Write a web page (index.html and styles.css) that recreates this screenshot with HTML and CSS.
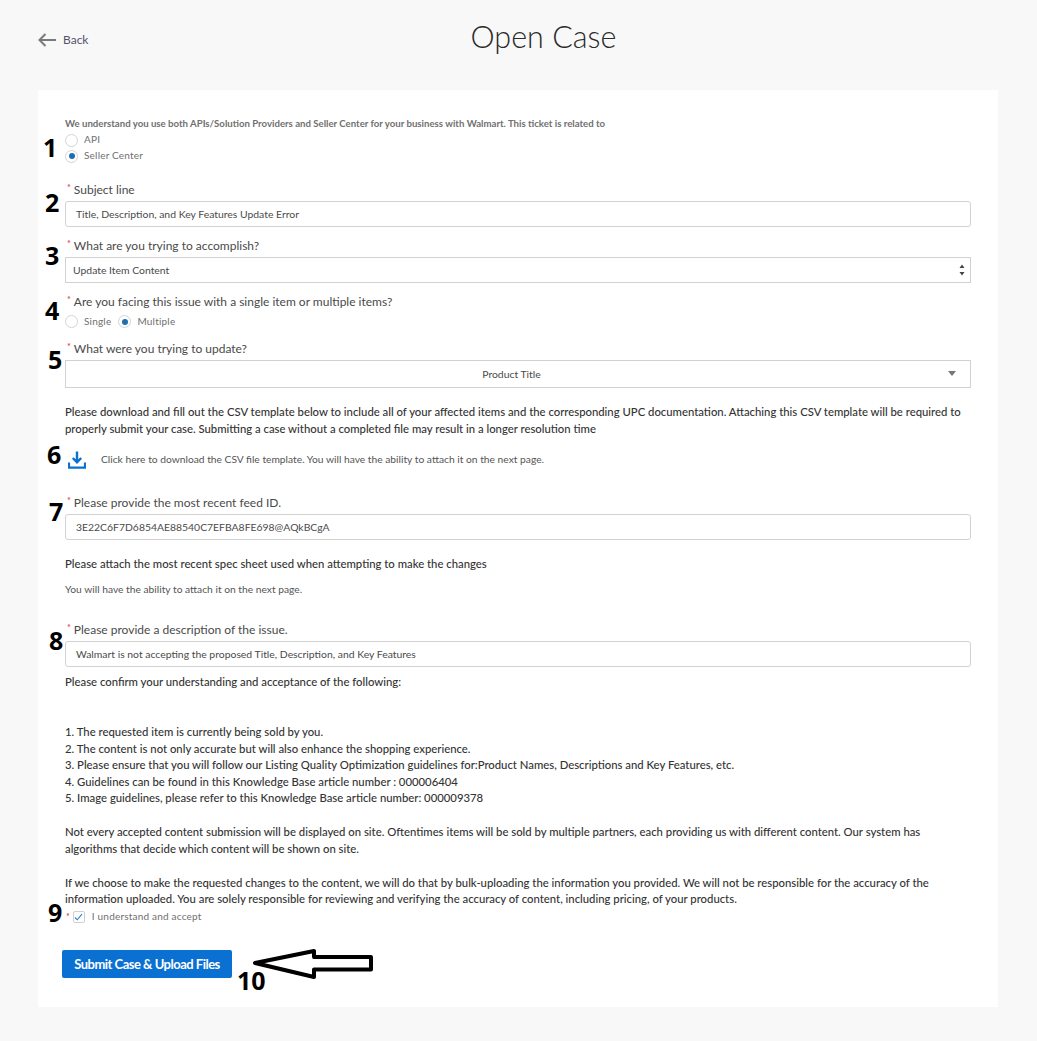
FILE: index.html
```html
<!DOCTYPE html>
<html lang="en">
<head>
<meta charset="utf-8">
<title>Open Case</title>
<link rel="stylesheet" href="styles.css">
</head>
<body>
<header class="top">
  <a class="back">
    <svg class="back-icon" width="18" height="14" viewBox="0 0 18 14"><path d="M7.5 1 1.5 7l6 6M1.5 7H18" fill="none" stroke="#7a7a7a" stroke-width="2"/></svg>
    <span>Back</span>
  </a>
  <h1 class="title">Open Case</h1>
</header>
<main class="card">
  <p class="intro">We understand you use both APIs/Solution Providers and Seller Center for your business with Walmart. This ticket is related to</p>
  <div class="radio-stack">
    <div class="radio-row"><span class="radio"></span><span class="opt">API</span></div>
    <div class="radio-row"><span class="radio on"></span><span class="opt">Seller Center</span></div>
  </div>

  <div class="field f-subject">
    <label class="label"><span class="req">*</span>Subject line</label>
    <div class="input">Title, Description, and Key Features Update Error</div>
  </div>
  <div class="field">
    <label class="label"><span class="req">*</span>What are you trying to accomplish?</label>
    <div class="select">Update Item Content
      <svg class="updown" width="6" height="12" viewBox="0 0 6 12"><path d="M3 .5 5.500 4H.5ZM3 11.500.5 8H5.500Z" fill="#444"/></svg>
    </div>
  </div>
  <div class="field">
    <label class="label"><span class="req">*</span>Are you facing this issue with a single item or multiple items?</label>
    <div class="radio-inline">
      <div class="radio-row"><span class="radio"></span><span class="opt">Single</span></div>
      <div class="radio-row"><span class="radio on"></span><span class="opt">Multiple</span></div>
    </div>
  </div>
  <div class="field f-update">
    <label class="label"><span class="req">*</span>What were you trying to update?</label>
    <div class="combo">Product Title<span class="caret"></span></div>
  </div>

  <p class="body p-csv">Please download and fill out the CSV template below to include all of your affected items and the corresponding UPC documentation. Attaching this CSV template will be required to properly submit your case. Submitting a case without a completed file may result in a longer resolution time</p>
  <div class="download">
    <svg class="dl-icon" width="18" height="18" viewBox="0 0 18 18"><path d="M9 .5V11M4.8 7 9 11.3 13.2 7" fill="none" stroke="#0a70d2" stroke-width="2.4"/><path d="M1 11.500V16.600H17V11.500" fill="none" stroke="#0a70d2" stroke-width="2.2"/></svg>
    <span class="small">Click here to download the CSV file template. You will have the ability to attach it on the next page.</span>
  </div>

  <div class="field f-feed">
    <label class="label"><span class="req">*</span>Please provide the most recent feed ID.</label>
    <div class="input">3E22C6F7D6854AE88540C7EFBA8FE698@AQkBCgA</div>
  </div>
  <p class="body p-spec">Please attach the most recent spec sheet used when attempting to make the changes</p>
  <p class="small p-next">You will have the ability to attach it on the next page.</p>
  <div class="field f-desc">
    <label class="label"><span class="req">*</span>Please provide a description of the issue.</label>
    <div class="input">Walmart is not accepting the proposed Title, Description, and Key Features</div>
  </div>

  <p class="body p-confirm">Please confirm your understanding and acceptance of the following:</p>
  <ol class="body rules">
    <li>1. The requested item is currently being sold by you.</li>
    <li>2. The content is not only accurate but will also enhance the shopping experience.</li>
    <li>3. Please ensure that you will follow our Listing Quality Optimization guidelines for:Product Names, Descriptions and Key Features, etc.</li>
    <li>4. Guidelines can be found in this Knowledge Base article number : 000006404</li>
    <li>5. Image guidelines, please refer to this Knowledge Base article number: 000009378</li>
  </ol>
  <p class="body p-gap">Not every accepted content submission will be displayed on site. Oftentimes items will be sold by multiple partners, each providing us with different content. Our system has algorithms that decide which content will be shown on site.</p>
  <p class="body p-gap">If we choose to make the requested changes to the content, we will do that by bulk-uploading the information you provided. We will not be responsible for the accuracy of the information uploaded. You are solely responsible for reviewing and verifying the accuracy of content, including pricing, of your products.</p>
  <div class="accept">
    <span class="req">*</span>
    <span class="check"><svg width="9" height="8" viewBox="0 0 9 8"><path d="M1 4.500 3.200 6.800 8 1.200" fill="none" stroke="#2d7fc4" stroke-width="1.1"/></svg></span>
    <span class="opt">I understand and accept</span>
  </div>
  <button class="submit" type="button">Submit Case &amp; Upload Files</button>

  <span class="mark m1">1</span>
  <span class="mark m2">2</span>
  <span class="mark m3">3</span>
  <span class="mark m4">4</span>
  <span class="mark m5">5</span>
  <span class="mark m6">6</span>
  <span class="mark m7">7</span>
  <span class="mark m8">8</span>
  <span class="mark m9">9</span>
  <span class="mark m10">10</span>
  <svg class="arrow" width="122" height="32" viewBox="0 0 122 32"><path d="M3 15 62 3V9H119V21.500H62V29Z" fill="#fff" stroke="#000" stroke-width="4" stroke-linejoin="round"/></svg>
</main>
</body>
</html>
```

FILE: styles.css
```css
* { box-sizing: border-box; }
html, body { margin: 0; padding: 0; }
body {
  width: 1037px;
  height: 1041px;
  background: #f8f8f8;
  font-family: Lato, "Liberation Sans", sans-serif;
  color: #333;
  overflow: hidden;
}
.top {
  height: 90px;
  position: relative;
  display: flex;
  justify-content: center;
  padding-left: 50px;
}
.back {
  position: absolute;
  left: 38px;
  top: 31px;
  display: flex;
  align-items: center;
  gap: 7px;
  font-size: 12px;
  line-height: 18px;
  color: #54536b;
}
.title {
  margin: 15px 0 0;
  font-size: 30.500px;
  line-height: 42px;
  font-weight: 300;
  color: #2b2b2b;
}
.card {
  position: relative;
  width: 960px;
  height: 917px;
  margin-left: 38px;
  padding: 26px 27px 0;
  background: #fff;
}
p { margin: 0; }
.intro {
  font-size: 9.650px;
  line-height: 14px;
  font-weight: 700;
  color: #707070;
  height: 14px;
}
.radio-stack { margin-top: 3.500px; display: flex; flex-direction: column; gap: 3px; }
.radio-row { display: flex; align-items: center; height: 13px; }
.radio {
  width: 13px;
  height: 13px;
  border-radius: 50%;
  border: 1px solid #d4d4d4;
  background: #fff;
  position: relative;
  flex: none;
}
.radio.on::after {
  content: "";
  position: absolute;
  left: 2.500px;
  top: 2.500px;
  width: 6px;
  height: 6px;
  border-radius: 50%;
  background: #1f6fb0;
}
.opt { margin-left: 6px; margin-bottom: 1px; font-size: 10px; line-height: 13px; color: #6f6f6f; letter-spacing: 0.2px; }
.radio-inline { display: flex; gap: 7px; margin-top: 2px; }
.field { margin-top: 8px; }
.f-subject { margin-top: 16.500px; }
.f-update { margin-top: 10px; }
.f-feed { margin-top: 20px; }
.f-desc { margin-top: 23px; }
.label {
  display: block;
  height: 22px;
  padding-left: 2px;
  font-size: 12px;
  line-height: 18px;
  color: #4a4a4a;
}
.req { color: #e0212b; font-size: 9px; vertical-align: 3px; margin-right: 3px; }
.input, .select, .combo {
  width: 906px;
  font-size: 10.400px;
  color: #4a4a4a;
  border: 1px solid #d2d2d2;
  background: #fff;
  display: flex;
  align-items: center;
}
.input { height: 26px; padding-left: 10px; border-radius: 3px; }
.select { height: 26px; padding-left: 7px; padding-bottom: 1px; position: relative; }
.updown { position: absolute; right: 5px; top: 6px; }
.combo { height: 28px; justify-content: center; position: relative; padding-right: 13px; }
.caret {
  position: absolute;
  right: 14px;
  top: 10px;
  width: 0;
  height: 0;
  border-left: 4px solid transparent;
  border-right: 4px solid transparent;
  border-top: 5px solid #777;
}
.body { font-size: 11.320px; line-height: 16.600px; color: #333; font-weight: 500; }
.small { font-size: 10.250px; line-height: 14px; color: #555; }
.p-csv { margin-top: 16px; width: 906px; }
.download { display: flex; align-items: center; margin-top: 11px; height: 24px; padding-left: 3px; }
.dl-icon { flex: none; }
.download .small { margin: 0 0 2px 15px; }
.p-spec { margin-top: 16px; }
.p-next { margin-top: 9px; }
.p-confirm { margin-top: 7px; }
.rules { list-style: none; margin: 33.600px 0 0; padding: 0; }
.p-gap { margin-top: 17.200px; width: 906px; }
.accept { display: flex; align-items: center; margin-top: 2px; height: 14px; }
.accept .req { margin: 0 2px 0 1px; }
.check {
  width: 12px;
  height: 12px;
  border: 1px solid #cfcfcf;
  border-radius: 2px;
  display: flex;
  align-items: center;
  justify-content: center;
  flex: none;
  margin-left: 1px;
}
.accept .opt { margin-left: 7px; margin-bottom: 0; }
.submit {
  display: block;
  margin: 26px 0 0 -3px;
  width: 170px;
  height: 28px;
  border: 0;
  border-radius: 2px;
  background: #0a70d2;
  color: #fff;
  font: 700 13px Lato, "Liberation Sans", sans-serif;
  letter-spacing: -0.500px;
}
.mark {
  position: absolute;
  font-family: "Open Sans", sans-serif;
  font-weight: 700;
  font-size: 25px;
  line-height: 24px;
  color: #000;
}
.m1 { left: 5px; top: 45px; }
.m2 { left: 7px; top: 100px; }
.m3 { left: 7px; top: 153px; }
.m4 { left: 7px; top: 208px; }
.m5 { left: 10px; top: 257px; }
.m6 { left: 9px; top: 352px; }
.m7 { left: 11px; top: 409px; }
.m8 { left: 11px; top: 538px; }
.m9 { left: 10px; top: 810px; }
.m10 { left: 199px; top: 878px; }
.arrow { position: absolute; left: 214px; top: 858px; }
```
